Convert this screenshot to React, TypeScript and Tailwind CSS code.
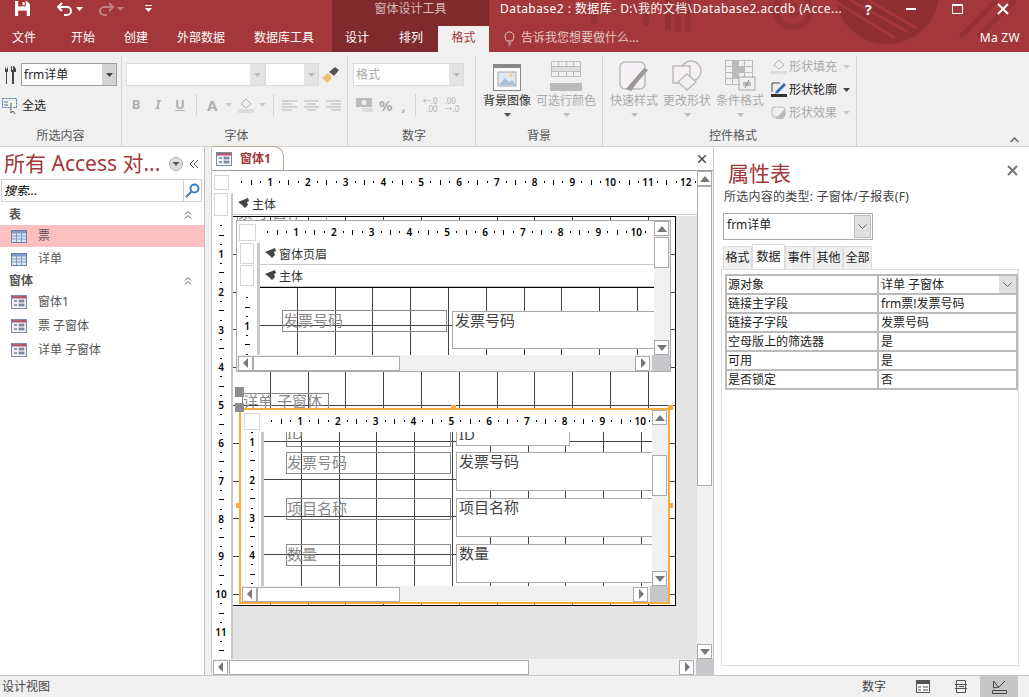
import type { ReactNode } from "react";

const red = "#a4373a";

function Caret({ className = "text-[#444]" }: { className?: string }) {
  return (
    <svg width="7" height="4" viewBox="0 0 7 4" className={className}>
      <path d="M0 0h7L3.5 4z" fill="currentColor" />
    </svg>
  );
}

function Arrow({ dir }: { dir: "up" | "down" | "left" | "right" }) {
  const d = { up: "M5 2l5 6H0z", down: "M0 2h10L5 8z", left: "M7 0v10L2 5z", right: "M3 0v10l5-5z" }[dir];
  return (
    <span className="flex h-[15px] w-[15px] shrink-0 items-center justify-center border border-[#aaa] bg-white">
      <svg width="10" height="10" viewBox="0 0 10 10" className="text-[#777]">
        <path d={d} fill="currentColor" />
      </svg>
    </span>
  );
}

function HBar({ thumb, corner = "w-[18px]" }: { thumb: string; corner?: string }) {
  return (
    <div className="flex h-[16px] shrink-0 items-center bg-[#f1f1f1] pl-[1px]">
      <Arrow dir="left" />
      <div className={"h-[15px] border border-[#aaa] bg-white " + thumb} />
      <div className="flex-1" />
      <Arrow dir="right" />
      <div className={"ml-[2px] h-full bg-[#c6c7cb] " + corner} />
    </div>
  );
}

function VBar({ thumb }: { thumb: string }) {
  return (
    <div className="flex w-[16px] shrink-0 flex-col bg-[#f1f1f1]">
      <Arrow dir="up" />
      <div className={"w-[15px] border border-[#aaa] bg-white " + thumb} />
      <div className="flex-1" />
      <Arrow dir="down" />
    </div>
  );
}

function HRuler({ count, className }: { count: number; className: string }) {
  return (
    <div className={"flex h-[16px] overflow-hidden bg-white " + className}>
      {Array.from({ length: count }, (_, i) => (
        <div key={i} className="grid w-[37.8px] shrink-0 grid-cols-4 place-items-center text-[10px] font-semibold leading-none text-black">
          <span className="h-[2px] w-[1px] bg-black" />
          <span className="h-[5px] w-[1px] bg-black" />
          <span className="h-[2px] w-[1px] bg-black" />
          <span>{i + 1}</span>
        </div>
      ))}
    </div>
  );
}

function VRuler({ from = 0, count, className }: { from?: number; count: number; className: string }) {
  return (
    <div className={"flex flex-col items-center " + className}>
      {Array.from({ length: count }, (_, i) => (
        <div key={i} className="grid h-[37.8px] w-full shrink-0 grid-rows-4 place-items-center text-[10px] font-semibold leading-none text-black">
          <span className="h-[1px] w-[2px] bg-black" />
          <span className="h-[1px] w-[5px] bg-black" />
          <span className="h-[1px] w-[2px] bg-black" />
          <span>{from + i + 1}</span>
        </div>
      ))}
    </div>
  );
}

const gridLines =
  "bg-white bg-[repeating-linear-gradient(to_right,transparent_0,transparent_36.8px,#444_36.8px,#444_37.8px),repeating-linear-gradient(to_bottom,transparent_0,transparent_36.8px,#444_36.8px,#444_37.8px)]";

function Band({ text }: { text: string }) {
  return (
    <div className="flex h-[22px] items-center gap-[3px] border-b border-[#c8c8c8] bg-white pl-[5px] pt-[2px] text-[12px] text-[#333]">
      <svg width="11" height="10" viewBox="0 0 11 10" className="mb-[3px] text-[#444]">
        <path d="M0 4L10 0l1 3-2 1 1 3-3 3-3-3z" fill="currentColor" />
      </svg>
      {text}
    </div>
  );
}

function Label({ text, className }: { text: string; className: string }) {
  return (
    <div className={"absolute flex h-[22px] w-[165px] items-center overflow-hidden border border-[#888] pb-[2px] text-[15px] leading-none text-[#888] " + className}>
      {text}
    </div>
  );
}

function TextBox({ text, className }: { text: string; className: string }) {
  return (
    <div className={"absolute overflow-hidden border border-[#aaa] bg-white pl-[2px] text-[15px] leading-[16px] text-[#444] " + className}>
      {text}
    </div>
  );
}

function NavIconForm() {
  return (
    <svg width="16" height="14" viewBox="0 0 16 14">
      <rect x=".5" y=".5" width="15" height="13" fill="#eef2f8" stroke="#7c8ba3" />
      <rect x="1" y="1" width="14" height="2.5" fill="#b5576a" />
      <path d="M3 6h3M3 10h3" stroke="#445" />
      <rect x="8" y="5" width="5" height="2" fill="#8fa3bf" stroke="#556" strokeWidth=".5" />
      <rect x="8" y="9" width="5" height="2" fill="#8fa3bf" stroke="#556" strokeWidth=".5" />
    </svg>
  );
}

function NavIconTable() {
  return (
    <svg width="16" height="13" viewBox="0 0 16 13">
      <rect x=".5" y=".5" width="15" height="12" fill="#dde6f2" stroke="#6c82a3" />
      <rect x="1" y="1" width="14" height="2.5" fill="#7f9cc4" />
      <path d="M5.5 1v11M10.5 1v11M1 6h14M1 9h14" stroke="#7f9cc4" />
    </svg>
  );
}

function NavRow({ text, active, icon }: { text: string; active?: boolean; icon: ReactNode }) {
  return (
    <div className={"flex items-center pl-[11px] text-[12px] text-[#555] " + (active ? "h-[22px] bg-[#fdc0c0]" : "h-[24px]")}>
      <span className="flex w-[27px]">{icon}</span>
      {text}
    </div>
  );
}

function NavGroup({ text, className = "" }: { text: string; className?: string }) {
  return (
    <div className={"flex h-[20px] items-center justify-between pl-[9px] pr-[12px] text-[12px] font-bold text-[#555] " + className}>
      {text}
      <svg width="8" height="8" viewBox="0 0 8 8" fill="none" stroke="#555">
        <path d="M1 3.5l3-3 3 3M1 7.5l3-3 3 3" />
      </svg>
    </div>
  );
}

function Combo({ className, text, dim }: { className: string; text?: string; dim?: boolean }) {
  return (
    <div className={"flex h-[23px] items-stretch border bg-white " + (dim ? "border-[#dcdcdc] " : "border-[#a0a0a0] ") + className}>
      <span className={"flex flex-1 items-center pl-[2px] text-[12px] " + (dim ? "text-[#aaa]" : "text-[#222]")}>{text}</span>
      <span className={"flex w-[14px] items-center justify-center " + (dim ? "bg-[#e3e3e3]" : "bg-[#d4d4d4]")}>
        <Caret className={dim ? "text-[#bbb]" : "text-[#444]"} />
      </span>
    </div>
  );
}

function RibbonGroup({ label, className, children }: { label: string; className: string; children: ReactNode }) {
  return (
    <div className={"flex h-[90px] shrink-0 flex-col border-r border-[#d4d4d4] " + className}>
      <div className="flex-1">{children}</div>
      <div className="pb-[2px] text-center text-[12px] leading-[16px] text-[#555]">{label}</div>
    </div>
  );
}

function BigButton({ text, icon, className, dim = true }: { text: string; icon: ReactNode; className: string; dim?: boolean }) {
  return (
    <div className={"flex flex-col items-center " + className}>
      <div className="flex h-[35px] items-end">{icon}</div>
      <div className={"mt-[2px] whitespace-nowrap text-[12px] leading-[16px] " + (dim ? "text-[#aaa]" : "text-[#333]")}>{text}</div>
      <Caret className={"mt-[4px] " + (dim ? "text-[#bbb]" : "text-[#555]")} />
    </div>
  );
}

function SideButton({ text, icon, dim = true }: { text: string; icon: ReactNode; dim?: boolean }) {
  return (
    <div className={"flex h-[23px] items-center gap-[2px] text-[12px] " + (dim ? "text-[#aaa]" : "text-[#222]")}>
      <span className="flex w-[16px] justify-center">{icon}</span>
      <span className="w-[52px] whitespace-nowrap">{text}</span>
      <Caret className={dim ? "text-[#ccc]" : "text-[#444]"} />
    </div>
  );
}

const gray = "#b4b4b4";

function AlignIcon({ d }: { d: string }) {
  return (
    <svg width="15" height="11" viewBox="0 0 15 11" fill="none" stroke={gray}>
      <path d={d} />
    </svg>
  );
}

function Ribbon() {
  return (
    <div className="flex h-[95px] shrink-0 border-b border-[#d4d4d4] bg-[#f0f0f0] pt-[4px]">
      <RibbonGroup label="所选内容" className="w-[122px]">
        <div className="flex items-center gap-[4px] pl-[4px] pt-[7px]">
          <svg width="13" height="18" viewBox="0 0 13 18" fill="#444">
            <path d="M1 0l1 3h1l1-3v6H3v12H2V6H1zM7 0h1v4h1V0h1l2 3v3h-2v12H8V6H7z" />
          </svg>
          <Combo className="w-[96px]" text="frm详单" />
        </div>
        <div className="flex items-center gap-[4px] pl-[2px] pt-[11px] text-[12px] text-[#222]">
          <svg width="16" height="16" viewBox="0 0 16 16" fill="none">
            <rect x=".5" y=".5" width="14" height="9" stroke="#3e6fa8" strokeDasharray="2 1" />
            <path d="M2 4h4M2 7h4" stroke="#3e6fa8" />
            <path d="M9 5v10l2-2 2 3" fill="#fff" stroke="#555" />
          </svg>
          全选
        </div>
      </RibbonGroup>

      <RibbonGroup label="字体" className="w-[226px] pl-[4px]">
        <div className="flex items-center pt-[7px]">
          <Combo dim className="w-[139px]" />
          <Combo dim className="w-[54px]" />
          <svg width="18" height="16" viewBox="0 0 18 16" className="ml-[3px]">
            <path d="M0 11l6-5 4 5-5 5z" fill="#f0bd6b" />
            <path d="M7 5l6-5 4 3-5 6z" fill="#555" />
          </svg>
        </div>
        <div className="-ml-[1px] mt-[8px] flex h-[22px] items-center font-bold text-[#b0b0b0]">
          <span className="w-[22px] text-center text-[13px]">B</span>
          <span className="w-[22px] text-center text-[13px] italic">I</span>
          <span className="w-[22px] text-center text-[13px] underline">U</span>
          <span className="ml-[5px] h-[22px] w-[1px] bg-[#d4d4d4]" />
          <span className="ml-[10px] text-[15px]">A</span>
          <Caret className="ml-[8px] text-[#ccc]" />
          <svg width="16" height="16" viewBox="0 0 16 16" className="ml-[6px]">
            <path d="M3 7l5-5 5 5-5 4z" fill="none" stroke={gray} />
            <rect y="12" width="16" height="4" fill="#ddd" />
          </svg>
          <Caret className="ml-[5px] text-[#ccc]" />
          <span className="ml-[7px] h-[22px] w-[1px] bg-[#d4d4d4]" />
          <span className="ml-[8px] flex gap-[7px]">
            <AlignIcon d="M0 1h15M0 4h10M0 7h15M0 10h10" />
            <AlignIcon d="M0 1h15M3 4h9M0 7h15M3 10h9" />
            <AlignIcon d="M0 1h15M5 4h10M0 7h15M5 10h10" />
          </span>
        </div>
      </RibbonGroup>

      <RibbonGroup label="数字" className="w-[128px] pl-[5px]">
        <div className="pt-[7px]">
          <Combo dim className="w-[111px]" text="格式" />
        </div>
        <div className="mt-[8px] flex h-[22px] items-center pl-[3px] text-[#b0b0b0]">
          <svg width="17" height="15" viewBox="0 0 17 15">
            <rect width="16" height="9" fill="#bbb" />
            <circle cx="8" cy="4.5" r="2.5" fill="#f0f0f0" />
            <path d="M6 11h11M6 13h11" stroke="#ccc" />
          </svg>
          <span className="ml-[6px] text-[15px] font-bold">%</span>
          <span className="ml-[9px] w-[8px] text-[15px] font-bold">,</span>
          <span className="ml-[5px] h-[22px] w-[1px] bg-[#d4d4d4]" />
          <span className="ml-[6px] w-[16px] text-right text-[8px] leading-[8px]">←.0<br />.00</span>
          <span className="ml-[7px] w-[16px] text-[8px] leading-[8px]">.00<br />→.0</span>
        </div>
      </RibbonGroup>

      <RibbonGroup label="背景" className="w-[127px]">
        <div className="flex pl-[7px]">
          <BigButton
            dim={false}
            className="w-[48px]"
            text="背景图像"
            icon={
              <svg width="28" height="27" viewBox="0 0 28 27">
                <rect x=".5" y=".5" width="27" height="26" fill="#fafafa" stroke="#888" />
                <rect width="28" height="4" fill="#888" />
                <rect x="5" y="8" width="18" height="14" fill="#dfe9f5" stroke="#aaa" />
                <path d="M6 21l6-7 4 4 3-2 4 5z" fill="#a8bedb" />
                <circle cx="18" cy="11" r="2" fill="#f3d28a" />
              </svg>
            }
          />
          <BigButton
            className="ml-[5px] w-[60px]"
            text="可选行颜色"
            icon={
              <svg width="32" height="30" viewBox="0 0 32 30" fill="none" stroke="#bbb">
                <path d="M1.5 .5h29v15h-29zM1.5 5.5h29M1.5 10.5h29M8.5 .5v15M16.5 .5v15M23.5 .5v15" />
                <rect x="2" y="6" width="28" height="4" fill="#ddd" stroke="none" />
                <rect y="22" width="32" height="8" fill="#bbb" stroke="none" />
              </svg>
            }
          />
        </div>
      </RibbonGroup>

      <RibbonGroup label="控件格式" className="w-[254px] pl-[7px]">
        <div className="flex">
          <BigButton
            className="w-[48px]"
            text="快速样式"
            icon={
              <svg width="30" height="30" viewBox="0 0 30 30">
                <rect x="1" y="1" width="25" height="27" rx="5" fill="#f4f0f4" stroke="#bbb" strokeWidth="1.5" />
                <path d="M29 9l-12 14-5 7-5-2 5-6 13-15z" fill="#999" />
              </svg>
            }
          />
          <BigButton
            className="ml-[5px] w-[48px]"
            text="更改形状"
            icon={
              <svg width="30" height="31" viewBox="0 0 30 31" fill="#f4f0f4" stroke="#bbb" strokeWidth="1.5">
                <circle cx="19" cy="11" r="10" />
                <rect x="1" y="6" width="17" height="17" />
                <path d="M15 14l9 8-9 8-9-8z" />
              </svg>
            }
          />
          <BigButton
            className="ml-[5px] w-[48px]"
            text="条件格式"
            icon={
              <svg width="31" height="31" viewBox="0 0 31 31">
                <path d="M.5.5h27v24H.5zM7.5.5v24M19.5.5v24M.5 6.5h27M.5 12.5h27M.5 18.5h27" fill="none" stroke="#bbb" />
                <rect x="8" y="1" width="6" height="17" fill="#bbb" />
                <rect x="14" y="7" width="5" height="5" fill="#bbb" />
                <rect x="14" y="17" width="16" height="13" fill="#f0f0f0" stroke="#aaa" />
                <path d="M18 23h8M18 25h8M24 20l-4 8" stroke="#888" fill="none" />
              </svg>
            }
          />
          <div className="-mt-[1px] ml-[7px]">
            <SideButton
              text="形状填充"
              icon={
                <svg width="16" height="15" viewBox="0 0 16 15">
                  <path d="M3 6l5-5 5 5-5 4z" fill="none" stroke={gray} />
                  <rect y="12" width="16" height="3" fill="#ddd" />
                </svg>
              }
            />
            <SideButton
              dim={false}
              text="形状轮廓"
              icon={
                <svg width="16" height="15" viewBox="0 0 16 15">
                  <path d="M1 10V1h8" fill="none" stroke="#444" />
                  <path d="M5 9l8-8 2 2-8 8-3 1z" fill="#2f6db5" />
                  <rect y="12" width="16" height="3" fill="#333" />
                </svg>
              }
            />
            <SideButton
              text="形状效果"
              icon={
                <svg width="16" height="15" viewBox="0 0 16 15">
                  <rect x="1" y="2" width="13" height="10" rx="3" fill="#eee" stroke="#bbb" />
                  <path d="M14 4l1 5-3 5H4z" fill="#bbb" />
                </svg>
              }
            />
          </div>
        </div>
      </RibbonGroup>

      <div className="flex flex-1 items-end justify-end pb-[3px] pr-[10px]">
        <svg width="9" height="6" viewBox="0 0 9 6" fill="none" stroke="#666" strokeWidth="1.5">
          <path d="M.5 5l4-4 4 4" />
        </svg>
      </div>
    </div>
  );
}

function TitleBar() {
  return (
    <div className="relative flex h-[52px] shrink-0 overflow-hidden bg-[#a4373a] text-white">
      <svg width="1029" height="52" viewBox="0 0 1029 52" className="absolute left-0 top-0" fill="none" stroke="#953235">
        <path d="M594 0v24M646 0v26M668 0v30M678 0v32M688 0v32" strokeWidth="6" />
        <circle cx="793" cy="10" r="17" strokeWidth="6" />
        <circle cx="793" cy="10" r="5" strokeWidth="4" />
        <circle cx="887" cy="-8" r="52" fill="#8f2f31" stroke="none" />
        <path d="M833 0l62 38M850 0l58 32M868 0l48 28" stroke="#a4373a" strokeWidth="3" />
        <path d="M960 37l37-37M978 37l37-37" strokeWidth="5" />
      </svg>

      <div className="relative w-[332px] shrink-0">
        <div className="flex h-[26px] items-center pb-[9px]">
          <svg width="15" height="15" viewBox="0 0 14 14" className="ml-[15px]">
            <path d="M0 0h11l3 3v11H0z" fill="#fff" />
            <rect x="3" y="0" width="7" height="5" fill="#a4373a" />
            <rect x="3" y="9" width="8" height="5" fill="#a4373a" />
            <rect x="7" y="1" width="2" height="3" fill="#fff" />
          </svg>
          <svg width="16" height="14" viewBox="0 0 16 14" fill="none" stroke="#fff" strokeWidth="2" className="ml-[27px]">
            <path d="M5 1L1 5l4 4M1 5h9a4 4 0 010 8H7" />
          </svg>
          <Caret className="ml-[3px] text-white" />
          <svg width="16" height="14" viewBox="0 0 16 14" fill="none" stroke="#c08084" strokeWidth="2" className="ml-[15px]">
            <path d="M11 1l4 4-4 4M15 5H6a4 4 0 000 8h3" />
          </svg>
          <Caret className="ml-[3px] text-[#c08084]" />
          <svg width="7" height="8" viewBox="0 0 7 8" fill="#fff" className="ml-[21px]">
            <path d="M0 0h7v1H0zM0 3h7L3.5 7z" />
          </svg>
        </div>
        <div className="flex h-[26px] items-center pb-[2px] text-[12px]">
          <span className="ml-[12px]">文件</span>
          <span className="ml-[35px]">开始</span>
          <span className="ml-[29px]">创建</span>
          <span className="ml-[29px]">外部数据</span>
          <span className="ml-[29px]">数据库工具</span>
        </div>
      </div>

      <div className="relative w-[157px] shrink-0 bg-[#7f2a2d]">
        <div className="flex h-[26px] items-center justify-center pb-[8px] text-[12px] text-[#d9b8b9]">窗体设计工具</div>
        <div className="flex h-[26px] items-stretch whitespace-nowrap text-[12px]">
          <span className="ml-[13px] shrink-0 pt-[3px]">设计</span>
          <span className="ml-[30px] shrink-0 pt-[3px]">排列</span>
          <span className="ml-[15px] flex w-[51px] shrink-0 items-center justify-center bg-[#f0f0f0] pb-[2px] text-[#a4373a]">格式</span>
        </div>
      </div>

      <div className="relative flex-1">
        <div className="flex h-[26px] items-center pb-[8px] text-[12px]">
          <span className="ml-[11px] w-[340px] whitespace-nowrap tracking-[0.45px]">Database2 : 数据库- D:\我的文档\Database2.accdb (Acce...</span>
          <span className="ml-[25px] w-[10px] text-[14px] font-bold">?</span>
          <span className="ml-[31px] h-[2px] w-[10px] bg-white" />
          <span className="ml-[36px] h-[10px] w-[11px] border border-t-2 border-white" />
          <svg width="12" height="12" viewBox="0 0 12 12" stroke="#fff" strokeWidth="2" className="ml-[34px]">
            <path d="M1 1l10 10M11 1L1 11" />
          </svg>
        </div>
        <div className="flex h-[26px] items-center pb-[2px] text-[12px]">
          <svg width="11" height="15" viewBox="0 0 11 15" fill="none" stroke="#e5c8c8" className="ml-[15px]">
            <path d="M3 10C0 7 .5 1 5.500 1S11 7 8 10zM4 12h3M4.500 14h2" />
          </svg>
          <span className="ml-[6px] text-[#e5c8c8]">告诉我您想要做什么...</span>
          <span className="ml-auto mr-[9px] tracking-[0.3px]">Ma ZW</span>
        </div>
      </div>
    </div>
  );
}

function Nav() {
  return (
    <div className="flex w-[205px] shrink-0 flex-col border-r border-[#c0c0c0] bg-white pt-[1px]">
      <div className="flex h-[31px] items-center pl-[4px]">
        <span className="w-[162px] whitespace-nowrap text-[21px] leading-none" style={{ color: red }}>所有 Access 对...</span>
        <svg width="14" height="14" viewBox="0 0 14 14" className="ml-[3px]">
          <circle cx="7" cy="7" r="6.500" fill="#ddd" stroke="#aaa" />
          <path d="M3.500 5h7L7 9z" fill="#555" />
        </svg>
        <svg width="9" height="8" viewBox="0 0 9 8" fill="none" stroke="#555" className="ml-[7px]">
          <path d="M4 0L0 4l4 4M8 0L4 4l4 4" />
        </svg>
      </div>
      <div className="mx-[1px] flex h-[23px] w-[201px] items-center border border-[#d0d0d0] pl-[2px] text-[12px] italic text-black">
        <span className="flex-1">搜索...</span>
        <span className="flex h-full w-[18px] items-center justify-center border-l border-[#d0d0d0]">
          <svg width="15" height="15" viewBox="0 0 15 15" fill="none" stroke="#3f7cc0" strokeWidth="2">
            <circle cx="9.500" cy="5.500" r="4" />
            <path d="M6.500 8.500L1 14" />
          </svg>
        </span>
      </div>
      <div className="pt-[3px]">
        <NavGroup text="表" />
        <NavRow active text="票" icon={<NavIconTable />} />
        <NavRow text="详单" icon={<NavIconTable />} />
        <NavGroup text="窗体" className="-mb-[1px]" />
        <NavRow text="窗体1" icon={<NavIconForm />} />
        <NavRow text="票 子窗体" icon={<NavIconForm />} />
        <NavRow text="详单 子窗体" icon={<NavIconForm />} />
      </div>
    </div>
  );
}

function FirstSubform() {
  return (
    <div className="absolute left-[3px] top-[3px] flex h-[152px] w-[435px] flex-col border border-[#aaa] bg-white">
      <div className="flex min-h-0 flex-1">
        <div className="flex min-w-0 flex-1 flex-col">
          <div className="flex h-[22px] shrink-0 items-center pl-[2px]">
            <div className="h-[17px] w-[17px] border border-[#d4d4d4]" />
            <HRuler count={11} className="ml-[2px] w-[397px] pl-[5px]" />
          </div>
          <div className="flex min-h-0 flex-1">
            <div className="flex w-[23px] shrink-0 flex-col border-r-[3px] border-[#c8c8c8] pl-[3px] pr-[3px]">
              <div className="h-[21px] border border-[#d4d4d4]" />
              <div className="mt-[1px] h-[21px] border border-[#d4d4d4]" />
              <div className="min-h-0 flex-1 overflow-hidden">
                <VRuler count={3} className="pt-[7px]" />
              </div>
            </div>
            <div className="flex min-w-0 flex-1 flex-col">
              <Band text="窗体页眉" />
              <Band text="主体" />
              <div className={"relative min-h-0 flex-1 overflow-hidden border-t border-black " + gridLines}>
                <Label text="发票号码" className="left-[22px] top-[22px]" />
                <TextBox text="发票号码" className="left-[192px] top-[23px] h-[38px] w-[215px]" />
              </div>
            </div>
          </div>
        </div>
        <VBar thumb="mt-[1px] h-[31px]" />
      </div>
      <HBar thumb="w-[147px]" />
    </div>
  );
}

function SecondSubform() {
  return (
    <div className="absolute left-[6px] top-[191px] flex h-[196px] w-[431px] flex-col border-2 border-[#fbaa3e] bg-white">
      <div className="flex min-h-0 flex-1">
        <div className="flex min-w-0 flex-1 flex-col">
          <div className="flex h-[22px] shrink-0 items-center pl-[3px]">
            <div className="h-[17px] w-[16px] border border-[#d4d4d4]" />
            <HRuler count={11} className="ml-[2px] w-[390px] pl-[5px]" />
          </div>
          <div className="flex min-h-0 flex-1">
            <div className="w-[23px] shrink-0 overflow-hidden border-r-[3px] border-[#c8c8c8] pl-[4px] pr-[2px]">
              <div className="border-x border-[#eee]">
                <VRuler count={5} className="-mt-[23px]" />
              </div>
            </div>
            <div className="relative min-w-0 flex-1 overflow-hidden">
              <div className={"absolute left-0 top-[-28px] h-[200px] w-full " + gridLines}>
                <Label text="ID" className="left-[22px] top-[21px] pb-[6px]" />
                <Label text="发票号码" className="left-[22px] top-[48px]" />
                <Label text="项目名称" className="left-[22px] top-[94px]" />
                <Label text="数量" className="left-[22px] top-[140px]" />
                <TextBox text="ID" className="left-[192px] top-[21px] h-[21px] w-[114px]" />
                <TextBox text="发票号码" className="left-[192px] top-[48px] h-[39px] w-[200px]" />
                <TextBox text="项目名称" className="left-[192px] top-[94px] h-[39px] w-[200px]" />
                <TextBox text="数量" className="left-[192px] top-[140px] h-[39px] w-[200px]" />
              </div>
            </div>
          </div>
        </div>
        <VBar thumb="mt-[30px] h-[41px]" />
      </div>
      <HBar thumb="w-[143px]" />
    </div>
  );
}

function Handle({ className }: { className: string }) {
  return <div className={"absolute " + className} />;
}

function DesignSurface() {
  return (
    <div className="flex min-h-0 flex-1 flex-col overflow-hidden">
      <div className="flex h-[22px] shrink-0 items-center bg-white pl-[2px]">
        <div className="h-[15px] w-[15px] border border-[#d4d4d4]" />
        <HRuler count={13} className="ml-[4px] h-[15px] w-[465px] pl-[4px]" />
      </div>
      <div className="flex min-h-0 flex-1">
        <div className="w-[21px] shrink-0 overflow-hidden border-r-2 border-[#c8c8c8] bg-white pl-[2px] pr-[3px]">
          <div className="h-[23px] border border-[#d4d4d4]" />
          <VRuler count={12} className="pt-[5px]" />
        </div>
        <div className="flex min-w-0 flex-1 flex-col bg-[#e4e4e4]">
          <div className="h-[23px] shrink-0 bg-white">
            <Band text="主体" />
          </div>
          <div className={"relative h-[390px] w-[443px] shrink-0 overflow-hidden border-b border-r border-t border-black " + gridLines}>
            <div className="absolute left-[4px] top-[-13px] h-[17px] w-[90px] border border-[#aaa] text-[15px] leading-[15px] text-[#888]">票 子窗体</div>
            <FirstSubform />
            <div className="absolute left-[9px] top-[176px] h-[17px] w-[87px] border border-[#888] text-[15px] leading-[15px] text-[#888]">详单 子窗体</div>
            <SecondSubform />
            <Handle className="left-[2px] top-[170px] h-[10px] w-[9px] bg-[#8a8d93]" />
            <Handle className="left-[2px] top-[186px] h-[9px] w-[9px] bg-[#8a8d93]" />
            <Handle className="left-[218px] top-[188px] h-[3px] w-[5px] bg-[#fbaa3e]" />
            <Handle className="left-[435px] top-[188px] h-[5px] w-[5px] bg-[#fbaa3e]" />
            <Handle className="left-[3px] top-[286px] h-[5px] w-[3px] bg-[#fbaa3e]" />
            <Handle className="left-[437px] top-[286px] h-[5px] w-[3px] bg-[#fbaa3e]" />
          </div>
        </div>
      </div>
    </div>
  );
}

function Documents() {
  return (
    <div className="ml-[6px] flex w-[503px] shrink-0 flex-col border-l border-r border-[#c8c8c8] bg-white">
      <div className="flex h-[24px] shrink-0 items-end justify-between border-b border-[#a0a0a0] bg-white pr-[7px]">
        <div className="flex h-[24px] w-[72px] items-center gap-[8px] rounded-tr-[10px] border-r border-t border-[#b9a98e] bg-white pl-[4px] text-[12px] font-bold" style={{ color: red }}>
          <NavIconForm />
          窗体1
        </div>
        <svg width="8" height="8" viewBox="0 0 8 8" stroke="#444" strokeWidth="1.400" className="mb-[7px]">
          <path d="M0 0l8 8M8 0L0 8" />
        </svg>
      </div>
      <div className="flex min-h-0 flex-1">
        <DesignSurface />
        <VBar thumb="h-[300px]" />
      </div>
      <HBar thumb="ml-[1px] w-[300px]" corner="w-[17px]" />
    </div>
  );
}

const properties = [
  ["源对象", "详单 子窗体"],
  ["链接主字段", "frm票!发票号码"],
  ["链接子字段", "发票号码"],
  ["空母版上的筛选器", "是"],
  ["可用", "是"],
  ["是否锁定", "否"],
];

const sheetTabs = ["格式", "数据", "事件", "其他", "全部"];

function PropertySheet() {
  return (
    <div className="flex min-w-0 flex-1 flex-col bg-white pl-[8px] pr-[8px]">
      <div className="flex h-[40px] items-end justify-between pl-[6px] pr-[3px]">
        <span className="text-[21px] leading-[28px]" style={{ color: red }}>属性表</span>
        <svg width="11" height="11" viewBox="0 0 11 11" stroke="#777" strokeWidth="2" className="mb-[11px]">
          <path d="M1 1l9 9M10 1L1 10" />
        </svg>
      </div>
      <div className="h-[26px] pl-[2px] pt-[1px] text-[12px] leading-[18px] tracking-[0.25px] text-[#444]">所选内容的类型: 子窗体/子报表(F)</div>
      <div className="ml-[1px] flex h-[27px] w-[150px] items-start border border-[#aaa] text-[12px] text-[#222]">
        <span className="flex-1 pl-[3px] pt-[2px]">frm详单</span>
        <span className="m-[1px] flex h-[23px] w-[17px] items-center justify-center border border-[#bbb] bg-[#e0e0e0]">
          <svg width="9" height="5" viewBox="0 0 9 5" fill="none" stroke="#666"><path d="M.5.5l4 4 4-4" /></svg>
        </span>
      </div>
      <div className="ml-[1px] mt-[5px] flex h-[24px] items-end">
        {sheetTabs.map((t) => (
          <div
            key={t}
            className={
              "flex items-center justify-center border border-[#ddd] text-[12px] text-[#222] " +
              (t === "数据" ? "h-[25px] w-[33px] border-b-0 bg-white" : "h-[23px] w-[29px] border-b-0 bg-[#f0f0f0]")
            }
          >
            {t}
          </div>
        ))}
      </div>
      <div className="-ml-[1px] mb-[9px] min-h-0 w-[298px] flex-1 border border-t border-[#ddd] px-[3px] pt-[4px]">
        <div className="w-[293px] border-l-2 border-t-2 border-[#bbb]">
          {properties.map(([k, v], i) => (
            <div key={k} className="flex h-[19px] border-b-2 border-r-2 border-[#bbb] text-[12px] leading-[17px] text-[#222]">
              <span className="w-[152px] shrink-0 whitespace-nowrap border-r-2 border-[#bbb] pl-[1px]">{k}</span>
              <span className="flex-1 pl-[2px]">{v}</span>
              {i === 0 && (
                <span className="flex w-[17px] items-center justify-center bg-[#e0e0e0]">
                  <svg width="9" height="5" viewBox="0 0 9 5" fill="none" stroke="#666"><path d="M.5.5l4 4 4-4" /></svg>
                </span>
              )}
            </div>
          ))}
        </div>
      </div>
    </div>
  );
}

function StatusBar() {
  return (
    <div className="flex h-[22px] shrink-0 items-center border-t border-[#c6c6c6] bg-[#f0f0f0] pl-[2px] text-[12px] text-[#444]">
      <span>设计视图</span>
      <span className="ml-auto">数字</span>
      <svg width="14" height="13" viewBox="0 0 14 13" className="ml-[30px]">
        <rect x=".5" y=".5" width="13" height="12" fill="#f8f8f8" stroke="#555" />
        <rect width="14" height="4" fill="#555" />
        <path d="M2 7h3M2 10h3M7 7h5M7 10h5" stroke="#555" />
      </svg>
      <svg width="12" height="13" viewBox="0 0 12 13" fill="none" stroke="#555" className="ml-[25px]">
        <path d="M1.500.5h9v12h-9zM0 4.500h12M0 8.500h12M4 6.500h5" />
      </svg>
      <span className="ml-[13px] mr-[11px] flex h-full w-[38px] items-center justify-center bg-[#c6c6c6]">
        <svg width="15" height="14" viewBox="0 0 15 14" fill="none" stroke="#444">
          <path d="M1.500 1v7l5-1zM.5 10.500h14v3H.5zM6 8l7-7" />
        </svg>
      </span>
    </div>
  );
}

export default function App() {
  return (
    <div className="flex h-[697px] w-[1029px] flex-col overflow-hidden bg-[#f0f0f0] font-['Noto_Sans','Noto_Sans_CJK_SC',sans-serif]">
      <TitleBar />
      <Ribbon />
      <div className="flex min-h-0 flex-1">
        <Nav />
        <Documents />
        <PropertySheet />
      </div>
      <StatusBar />
    </div>
  );
}
